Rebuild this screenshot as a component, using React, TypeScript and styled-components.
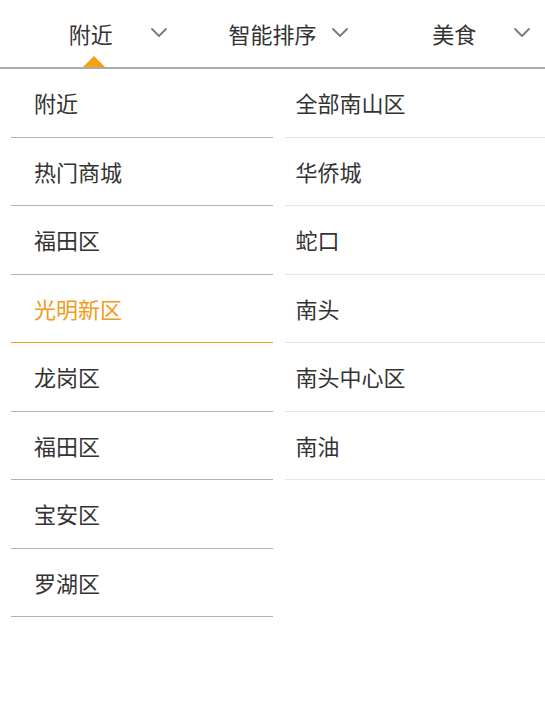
import React from "react";
import styled, { createGlobalStyle } from "styled-components";

const GlobalStyle = createGlobalStyle`
  html, body {
    margin: 0;
    padding: 0;
    background: #ffffff;
  }
  body {
    font-family: "Noto Sans CJK SC", "Noto Sans", sans-serif;
    color: #333333;
  }
  * { box-sizing: border-box; }
`;

const Page = styled.div`
  width: 545px;
  min-height: 707px;
  background: #ffffff;
`;

const TabBar = styled.div`
  display: grid;
  grid-template-columns: repeat(3, 1fr);
  height: 69px;
  border-bottom: 2px solid #ababab;
`;

const Tab = styled.div`
  position: relative;
  display: grid;
  grid-template-columns: 1fr;
  align-items: center;
  padding-bottom: 1px;
`;

const TabLabel = styled.span`
  grid-area: 1 / 1;
  justify-self: center;
  font-size: 22px;
  line-height: 1;
  color: #333333;
`;

const Chevron = styled.svg`
  grid-area: 1 / 1;
  justify-self: end;
  margin-right: 15px;
  margin-top: -2px;
  width: 16px;
  height: 9px;
`;

const Caret = styled.span`
  position: absolute;
  bottom: 0;
  left: calc(50% + 3px);
  transform: translateX(-50%);
  width: 0;
  height: 0;
  border-left: 11px solid transparent;
  border-right: 11px solid transparent;
  border-bottom: 11px solid #f7a10f;
`;

const Columns = styled.div`
  display: grid;
  grid-template-columns: 1fr 1fr;
  align-items: start;
`;

const List = styled.ul<{ $offset: number }>`
  list-style: none;
  margin: 0 0 0 ${(p) => p.$offset}px;
  padding: 0;
`;

const Item = styled.li<{ $pad: number; $line: string; $active?: boolean }>`
  display: flex;
  align-items: center;
  height: 68.5px;
  padding-left: ${(p) => p.$pad}px;
  padding-bottom: 1px;
  border-bottom: 1px solid ${(p) => (p.$active ? "#f2a32a" : p.$line)};
  font-size: 22px;
  line-height: 1;
  color: ${(p) => (p.$active ? "#f29a1a" : "#333333")};
`;

const ChevronIcon = () => (
  <Chevron viewBox="0 0 16 9" fill="none">
    <path d="M1 1 L8 8 L15 1" stroke="#7a7a7a" strokeWidth="1.8" strokeLinecap="round" strokeLinejoin="round" />
  </Chevron>
);

const tabs = [
  { label: "附近", active: true },
  { label: "智能排序", active: false },
  { label: "美食", active: false },
];

const leftItems = ["附近", "热门商城", "福田区", "光明新区", "龙岗区", "福田区", "宝安区", "罗湖区"];
const rightItems = ["全部南山区", "华侨城", "蛇口", "南头", "南头中心区", "南油"];

export default function App() {
  return (
    <Page>
      <GlobalStyle />
      <TabBar>
        {tabs.map((t) => (
          <Tab key={t.label}>
            <TabLabel>{t.label}</TabLabel>
            <ChevronIcon />
            {t.active && <Caret />}
          </Tab>
        ))}
      </TabBar>
      <Columns>
        <List $offset={11}>
          {leftItems.map((name, i) => (
            <Item key={i} $pad={23} $line="#b3b3b3" $active={name === "光明新区"}>
              {name}
            </Item>
          ))}
        </List>
        <List $offset={12}>
          {rightItems.map((name, i) => (
            <Item key={i} $pad={11} $line="#e6e6e6">
              {name}
            </Item>
          ))}
        </List>
      </Columns>
    </Page>
  );
}
